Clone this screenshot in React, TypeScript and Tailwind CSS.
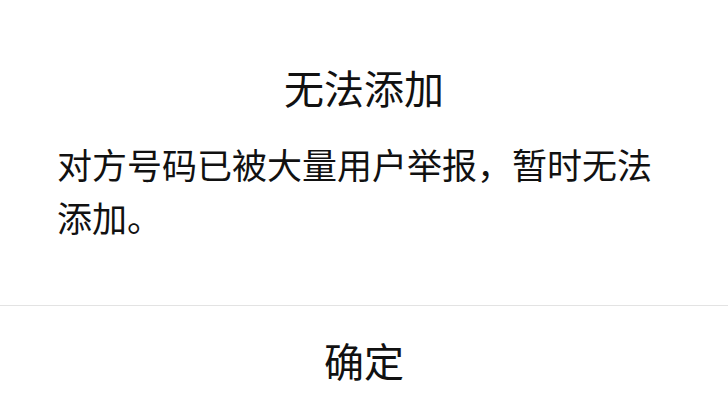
import React from 'react';

const App: React.FC = () => {
  return (
    <div
      className="flex h-[413px] w-[728px] flex-col bg-white text-[#111111]"
      style={{ fontFamily: '"Noto Sans CJK SC", "Noto Sans", sans-serif' }}
    >
      <div className="flex h-[305px] flex-col px-[57px] pt-[59px]">
        <h1 className="text-center text-[40px] font-normal leading-[56px]">无法添加</h1>
        <p className="mt-[22px] text-[35px] leading-[53px]">
          对方号码已被大量用户举报，暂时无法添加。
        </p>
      </div>
      <div className="h-px bg-[#e3e3e3]" />
      <button className="flex flex-1 items-center justify-center text-[40px] leading-none">
        确定
      </button>
    </div>
  );
};

export default App;
